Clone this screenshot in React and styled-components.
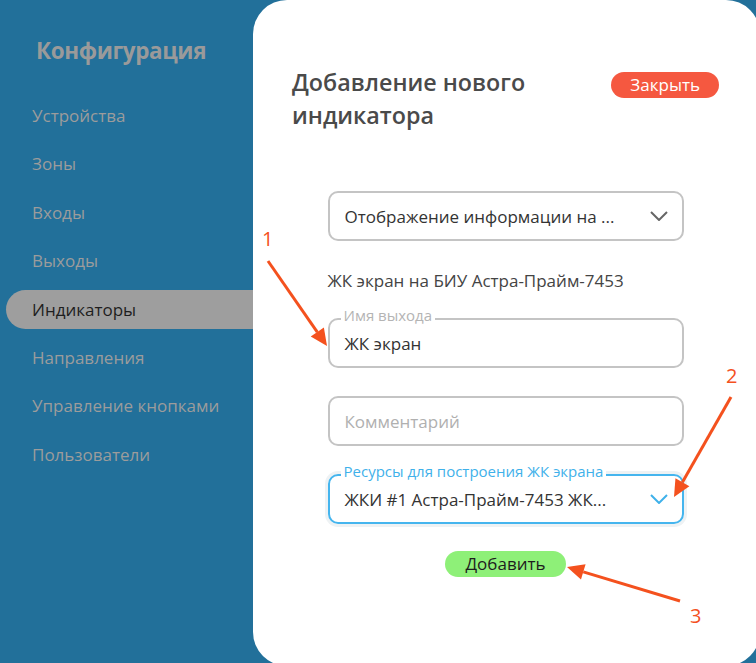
import React from "react";
import styled, { createGlobalStyle } from "styled-components";

const GlobalStyle = createGlobalStyle`
  html, body {
    margin: 0;
    padding: 0;
    background: #22709a;
    font-family: "Open Sans", "Noto Sans", sans-serif;
  }
`;

const Page = styled.div`
  position: relative;
  display: flex;
  width: 756px;
  height: 663px;
  background: #22709a;
  overflow: hidden;
`;

const Sidebar = styled.nav`
  width: 253px;
  flex-shrink: 0;
  display: flex;
  flex-direction: column;
`;

const SideTitle = styled.h1`
  margin: 36px 0 30px 36px;
  font-size: 22.5px;
  font-weight: 700;
  color: #9a9a9a;
  line-height: 30px;
  letter-spacing: -0.4px;
`;

const MenuItem = styled.div`
  display: flex;
  align-items: center;
  height: 39px;
  margin: 0 -12px 9.4px 6px;
  padding-left: 26px;
  border-radius: 20px 0 0 20px;
  font-size: 17px;
  color: ${(p) => (p.$active ? "#1e1e1e" : "#9c9c9c")};
  background: ${(p) => (p.$active ? "#9e9e9e" : "transparent")};
`;

const Card = styled.main`
  position: relative;
  z-index: 1;
  flex: 1;
  margin-right: -4px;
  height: 666px;
  background: #fff;
  border-radius: 34px;
  padding: 66px 41px 0 39px;
  box-sizing: border-box;
`;

const Header = styled.div`
  display: flex;
  justify-content: space-between;
  align-items: flex-start;
`;

const Title = styled.h2`
  margin: 0;
  font-size: 23.3px;
  line-height: 33px;
  font-weight: 600;
  color: #4a4a4a;
`;

const Pill = styled.button`
  border: none;
  border-radius: 13px;
  height: 26px;
  padding: 0 ${(p) => p.$px || 19}px;
  font-family: inherit;
  font-size: 17px;
  line-height: 26px;
  color: ${(p) => p.$fg};
  background: ${(p) => p.$bg};
`;

const Form = styled.div`
  display: flex;
  flex-direction: column;
  align-items: center;
  margin-top: 59px;
`;

const Field = styled.div`
  position: relative;
  width: 356px;
  height: 50px;
  box-sizing: border-box;
  border: 2px solid ${(p) => (p.$focus ? "#45b5ee" : "#c4c4c4")};
  border-radius: 10px;
  display: flex;
  align-items: center;
  padding: 0 14px 0 15px;
  margin-bottom: 28px;
  box-shadow: ${(p) => (p.$focus ? "0 0 0 3px #eef2f4" : "none")};
`;

const Legend = styled.span`
  position: absolute;
  top: -15px;
  left: 11px;
  padding: 0 3px;
  background: linear-gradient(to bottom, transparent 0 40%, #fff 40% 100%);
  font-size: 15px;
  line-height: 20px;
  color: ${(p) => (p.$focus ? "#3fb1ea" : "#b4b4b4")};
`;

const Value = styled.span`
  flex: 1;
  font-size: 17px;
  color: ${(p) => (p.$placeholder ? "#b0b0b0" : "#333")};
  white-space: nowrap;
`;

const Info = styled.div`
  width: 356px;
  font-size: 17px;
  line-height: 22px;
  color: #444;
  margin: 29px 0 26px;
`;

const Overlay = styled.svg`
  position: absolute;
  inset: 0;
  z-index: 2;
  pointer-events: none;
`;

const Chevron = ({ color }) => (
  <svg width="18" height="10" viewBox="0 0 18 10">
    <polyline points="1,1 9,9 17,1" fill="none" stroke={color} strokeWidth="2" />
  </svg>
);

const Arrow = ({ x1, y1, x2, y2 }) => {
  const a = Math.atan2(y2 - y1, x2 - x1);
  const len = 17;
  const w = 8;
  const bx = x2 - len * Math.cos(a);
  const by = y2 - len * Math.sin(a);
  const px = -Math.sin(a) * w;
  const py = Math.cos(a) * w;
  return (
    <g>
      <line x1={x1} y1={y1} x2={bx} y2={by} stroke="#f4511e" strokeWidth="3" />
      <polygon points={`${x2},${y2} ${bx + px},${by + py} ${bx - px},${by - py}`} fill="#f4511e" />
    </g>
  );
};

const menu = [
  "Устройства",
  "Зоны",
  "Входы",
  "Выходы",
  "Индикаторы",
  "Направления",
  "Управление кнопками",
  "Пользователи",
];

export default function App() {
  return (
    <Page>
      <GlobalStyle />
      <Sidebar>
        <SideTitle>Конфигурация</SideTitle>
        {menu.map((m) => (
          <MenuItem key={m} $active={m === "Индикаторы"}>
            {m}
          </MenuItem>
        ))}
      </Sidebar>
      <Card>
        <Header>
          <Title>
            Добавление нового
            <br />
            индикатора
          </Title>
          <Pill $bg="#f55840" $fg="#fff" style={{ marginTop: 6 }}>
            Закрыть
          </Pill>
        </Header>
        <Form>
          <Field style={{ marginBottom: 0 }}>
            <Value>Отображение информации на ...</Value>
            <Chevron color="#666" />
          </Field>
          <Info>ЖК экран на БИУ Астра-Прайм-7453</Info>
          <Field>
            <Legend>Имя выхода</Legend>
            <Value>ЖК экран</Value>
          </Field>
          <Field>
            <Value $placeholder>Комментарий</Value>
          </Field>
          <Field $focus style={{ marginBottom: 27 }}>
            <Legend $focus>Ресурсы для построения ЖК экрана</Legend>
            <Value>ЖКИ #1 Астра-Прайм-7453 ЖК...</Value>
            <Chevron color="#3fb1ea" />
          </Field>
          <Pill $bg="#8ef078" $fg="#1e1e1e" $px={20}>
            Добавить
          </Pill>
        </Form>
      </Card>
      <Overlay width="756" height="663">
        <text x="262" y="246" fill="#f4511e" fontSize="20" fontFamily="Open Sans">1</text>
        <text x="726" y="383" fill="#f4511e" fontSize="20" fontFamily="Open Sans">2</text>
        <text x="690" y="623" fill="#f4511e" fontSize="20" fontFamily="Open Sans">3</text>
        <Arrow x1={268} y1={261} x2={327} y2={346} />
        <Arrow x1={731} y1={397} x2={674} y2={497} />
        <Arrow x1={680} y1={601} x2={567} y2={567} />
      </Overlay>
    </Page>
  );
}
